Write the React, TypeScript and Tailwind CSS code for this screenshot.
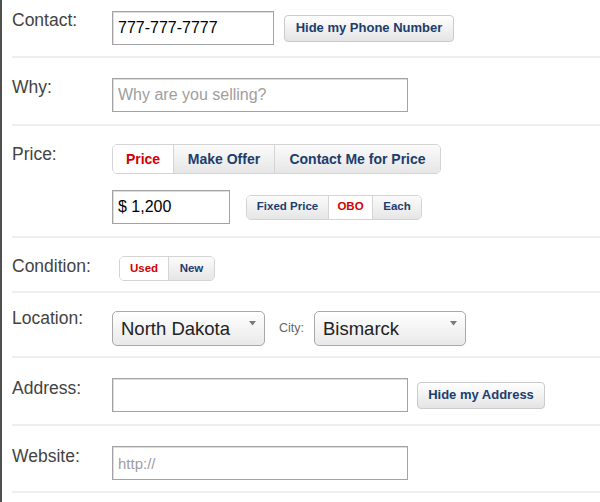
import type { ReactNode } from "react";

const btnFace =
  "bg-gradient-to-b from-[#ffffff] to-[#e4e4e4] text-[#1c3d6e] font-bold";

function Row({
  label,
  labelClass = "",
  className = "",
  children,
}: {
  label: string;
  labelClass?: string;
  className?: string;
  children: ReactNode;
}) {
  return (
    <div className={`flex items-start border-b-2 border-[#efefef] ${className}`}>
      <div
        className={`w-[100px] shrink-0 text-[17.5px] leading-[20px] text-[#434343] ${labelClass}`}
      >
        {label}
      </div>
      <div className="flex-1">{children}</div>
    </div>
  );
}

function TextBox({
  width,
  value,
  placeholder,
  small = false,
}: {
  width: string;
  value?: string;
  placeholder?: string;
  small?: boolean;
}) {
  return (
    <input
      readOnly
      defaultValue={value}
      placeholder={placeholder}
      className={`${width} h-[34px] border border-[#a3a3a3] bg-white pl-[5px] text-black shadow-[inset_1px_1px_0_#dedede] outline-none placeholder:text-[#9e9e9e] ${
        small ? "text-[15px]" : "text-[16px]"
      }`}
    />
  );
}

function Button({ children, width }: { children: ReactNode; width: string }) {
  return (
    <div
      className={`${width} ${btnFace} flex h-[27px] items-center justify-center rounded-[4px] border border-[#cbcbcb] text-[13px]`}
    >
      {children}
    </div>
  );
}

type Seg = { text: string; width: string; active?: boolean };

function Segmented({
  items,
  height,
  size,
}: {
  items: Seg[];
  height: string;
  size: string;
}) {
  return (
    <div
      className={`flex ${height} overflow-hidden rounded-[5px] border border-[#d4d4d4] ${size}`}
    >
      {items.map((s, i) => (
        <div
          key={s.text}
          className={`${s.width} flex items-center justify-center font-bold ${
            i > 0 ? "border-l border-[#d4d4d4]" : ""
          } ${
            s.active
              ? "bg-white text-[#d40000]"
              : "bg-gradient-to-b from-[#fbfbfb] to-[#e6e6e6] text-[#1c3d6e]"
          }`}
        >
          {s.text}
        </div>
      ))}
    </div>
  );
}

function Dropdown({ width, value }: { width: string; value: string }) {
  return (
    <div
      className={`${width} relative flex h-[35px] items-center rounded-[5px] border border-[#a8a8a8] bg-gradient-to-b from-[#ffffff] to-[#e9e9e9] pl-[8px] text-[18.5px] text-[#222222]`}
    >
      {value}
      <svg
        className="absolute right-[8px] top-[9px]"
        width="7"
        height="5"
        viewBox="0 0 7 5"
      >
        <path d="M0 0h7L3.5 4.5z" fill="#7a7a7a" />
      </svg>
    </div>
  );
}

export default function App() {
  return (
    <div className="min-h-[502px] border-l-2 border-[#4f4f4f] bg-white pl-[10px] font-['Liberation_Sans',Arial,sans-serif]">
      <Row label="Contact:" className="pt-[11px] pb-[11px]" labelClass="mt-[-1px]">
        <div className="flex items-center gap-[10px]">
          <TextBox width="w-[162px]" value="777-777-7777" />
          <Button width="w-[170px]">Hide my Phone Number</Button>
        </div>
      </Row>

      <Row label="Why:" className="pt-[20px] pb-[12px]" labelClass="mt-[-1px]">
        <TextBox width="w-[296px]" placeholder="Why are you selling?" />
      </Row>

      <Row label="Price:" className="pt-[18px] pb-[12px]">
        <div className="flex flex-col gap-[16px]">
          <Segmented
            height="h-[30px]"
            size="w-[329px] text-[14px]"
            items={[
              { text: "Price", width: "w-[60px]", active: true },
              { text: "Make Offer", width: "w-[101px]" },
              { text: "Contact Me for Price", width: "flex-1" },
            ]}
          />
          <div className="flex items-center gap-[16px]">
            <TextBox width="w-[118px]" value="$ 1,200" />
            <Segmented
              height="h-[25px]"
              size="w-[176px] text-[11.5px]"
              items={[
                { text: "Fixed Price", width: "w-[81px]" },
                { text: "OBO", width: "w-[44px]", active: true },
                { text: "Each", width: "flex-1" },
              ]}
            />
          </div>
        </div>
      </Row>

      <Row label="Condition:" className="pt-[18px] pb-[10px]">
        <div className="pl-[7px]">
          <Segmented
            height="h-[25px]"
            size="w-[96px] text-[11.5px]"
            items={[
              { text: "Used", width: "w-[48px]", active: true },
              { text: "New", width: "flex-1" },
            ]}
          />
        </div>
      </Row>

      <Row label="Location:" className="pt-[18px] pb-[10px]" labelClass="mt-[-3px]">
        <div className="flex items-center">
          <Dropdown width="w-[153px]" value="North Dakota" />
          <span className="ml-[14px] mr-[10px] text-[12.5px] text-[#666666]">City:</span>
          <Dropdown width="w-[152px]" value="Bismarck" />
        </div>
      </Row>

      <Row label="Address:" className="pt-[20px] pb-[12px]">
        <div className="flex items-center gap-[9px]">
          <TextBox width="w-[296px]" />
          <Button width="w-[128px]">Hide my Address</Button>
        </div>
      </Row>

      <Row label="Website:" className="pt-[20px] pb-[11px]">
        <TextBox width="w-[296px]" placeholder="http://" small />
      </Row>
    </div>
  );
}
